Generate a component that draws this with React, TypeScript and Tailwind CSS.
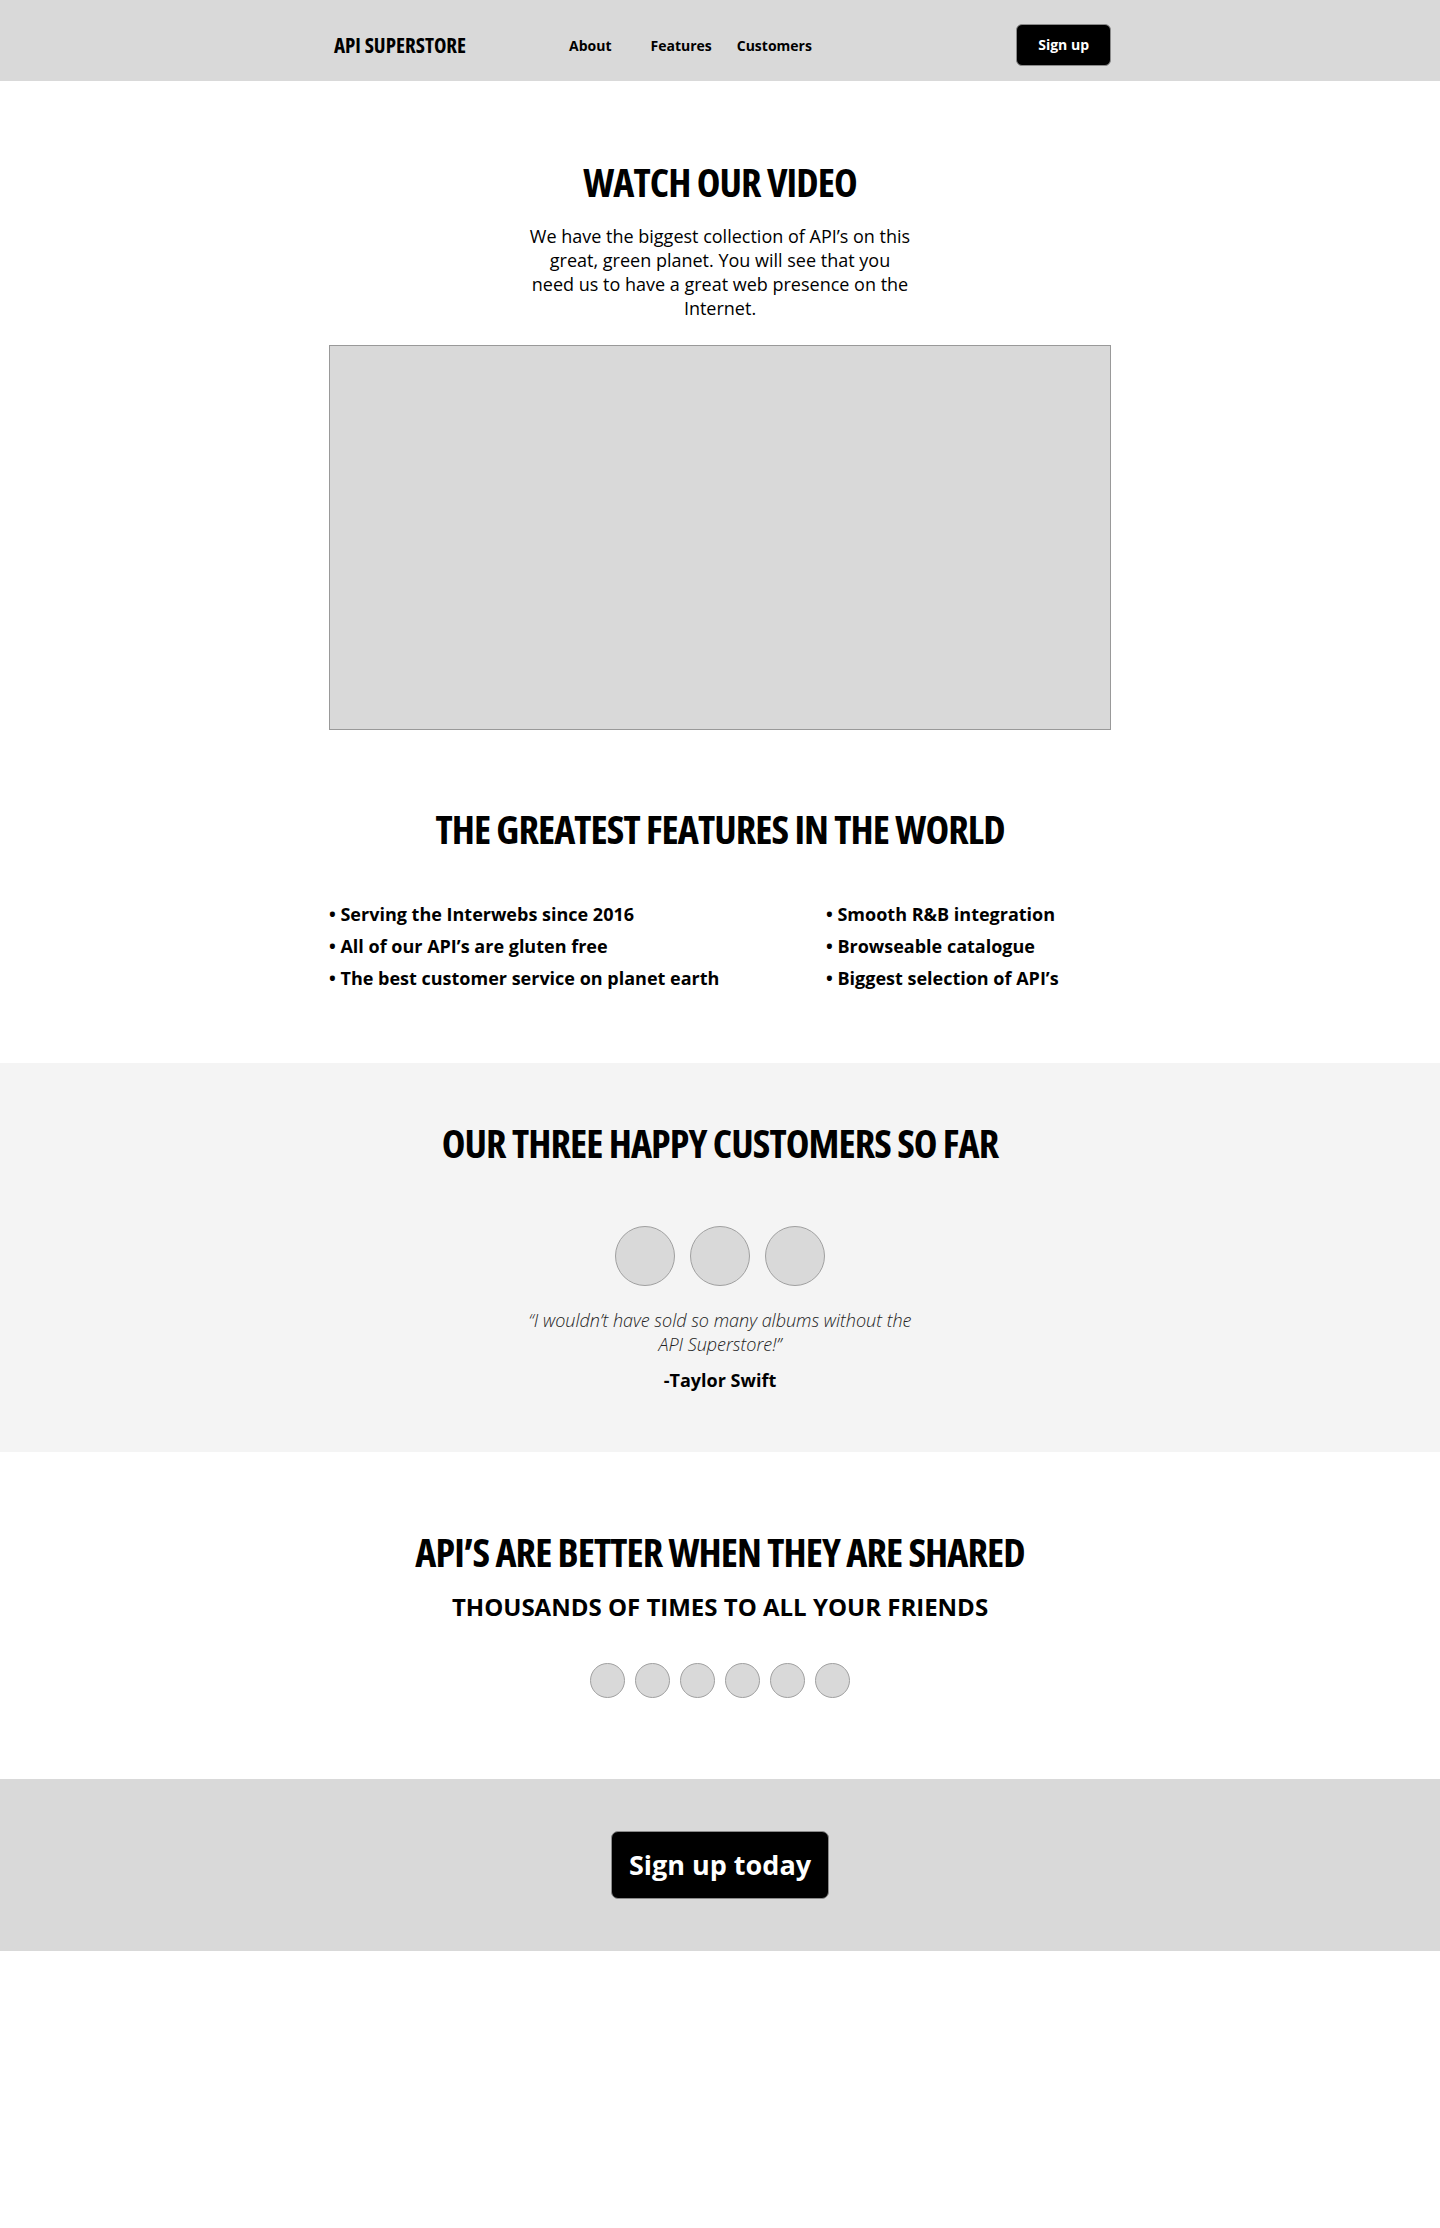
const heading = "font-['Open_Sans',sans-serif] font-stretch-[75%] font-bold text-[40px] leading-[48px] tracking-[-0.9px] text-black uppercase text-center";

const leftFeatures = [
  "Serving the Interwebs since 2016",
  "All of our API’s are gluten free",
  "The best customer service on planet earth",
];

const rightFeatures = [
  "Smooth R&B integration",
  "Browseable catalogue",
  "Biggest selection of API’s",
];

const Header = () => (
  <header className="bg-[#d9d9d9] h-[81px]">
    <div className="mx-auto w-[782px] h-full flex items-center pt-[10px]">
      <div className="w-[240px] pl-[5px] font-stretch-[75%] font-bold text-[21px] leading-none">
        API SUPERSTORE
      </div>
      <nav className="flex text-[14px] font-bold text-black">
        <a href="#">About</a>
        <a href="#" className="ml-[39px]">Features</a>
        <a href="#" className="ml-[25px]">Customers</a>
      </nav>
      <button className="ml-auto -mt-[2px] h-[42px] px-[21px] rounded-[6px] bg-black border border-[#8a8a8a] text-white text-[14px] font-bold">
        Sign up
      </button>
    </div>
  </header>
);

const FeatureList = ({ items }: { items: string[] }) => (
  <ul className="text-[18px] leading-[32px] font-bold text-black">
    {items.map((item) => (
      <li key={item}>• {item}</li>
    ))}
  </ul>
);

export default function App() {
  return (
    <div className="min-h-[2228px] bg-white font-['Open_Sans',sans-serif] text-black">
      <Header />

      <section className="mx-auto w-[782px] pt-[77px] pb-[69px] flex flex-col items-center">
        <h1 className={heading}>Watch our video</h1>
        <p className="mt-[18px] w-[400px] text-center text-[18px] leading-[24px]">
          We have the biggest collection of API’s on this<br />great, green planet. You will see that you<br />need us to have a great web presence on the<br />Internet.
        </p>
        <div className="mt-[25px] w-full h-[385px] bg-[#d9d9d9] border border-[#999999]" />

        <h2 className={heading + " mt-[75px]"}>The greatest features in the world</h2>
        <div className="mt-[45px] w-full grid grid-cols-[497px_1fr]">
          <FeatureList items={leftFeatures} />
          <FeatureList items={rightFeatures} />
        </div>
      </section>

      <section className="bg-[#f4f4f4] pt-[56px] pb-[58px] flex flex-col items-center">
        <h2 className={heading}>Our three happy customers so far</h2>
        <div className="mt-[59px] flex gap-[15px]">
          {[0, 1, 2].map((i) => (
            <div key={i} className="w-[60px] h-[60px] rounded-full bg-[#d9d9d9] border border-[#a0a0a0]" />
          ))}
        </div>
        <p className="mt-[22px] w-[420px] text-center text-[18px] leading-[24px] italic font-light text-[#222]">
          “I wouldn’t have sold so many albums without the<br />API Superstore!”
        </p>
        <p className="mt-[10px] text-[18px] leading-[28px] font-bold">-Taylor Swift</p>
      </section>

      <section className="pt-[76px] pb-[81px] flex flex-col items-center">
        <h2 className={heading}>API’s are better when they are shared</h2>
        <h3 className="mt-[15px] text-[24px] leading-[32px] font-bold uppercase text-center">
          Thousands of times to all your friends
        </h3>
        <div className="mt-[40px] flex gap-[10px]">
          {[0, 1, 2, 3, 4, 5].map((i) => (
            <div key={i} className="w-[35px] h-[35px] rounded-full bg-[#d9d9d9] border border-[#a0a0a0]" />
          ))}
        </div>
      </section>

      <section className="bg-[#d9d9d9] py-[52px] flex justify-center">
        <button className="h-[68px] px-[17px] rounded-[7px] bg-black border border-[#8a8a8a] text-white text-[27px] font-bold">
          Sign up today
        </button>
      </section>
    </div>
  );
}
